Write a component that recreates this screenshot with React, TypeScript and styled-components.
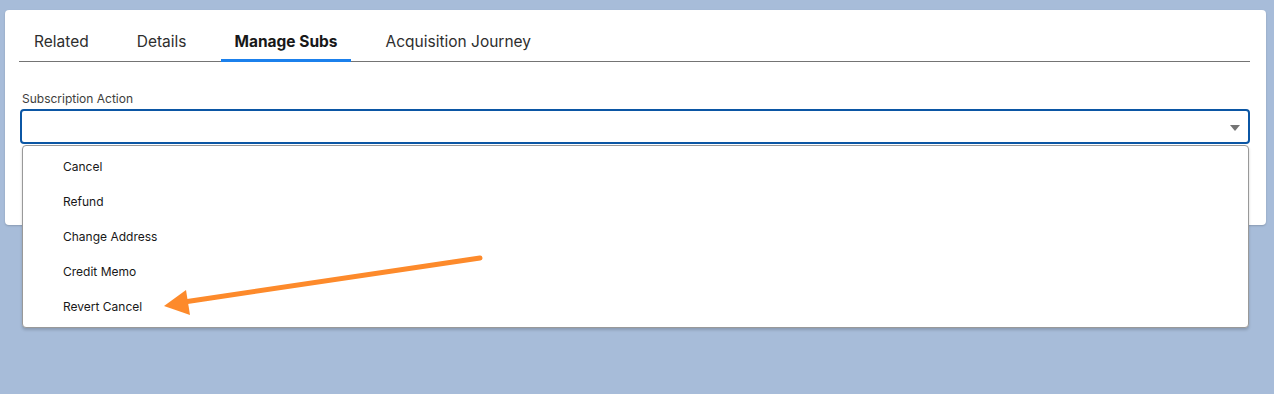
import React from "react";
import styled, { createGlobalStyle } from "styled-components";

const GlobalStyle = createGlobalStyle`
  html, body {
    margin: 0;
    padding: 0;
    background: #a7bcd9;
    font-family: Inter, "Liberation Sans", Arial, sans-serif;
    color: #181818;
  }
`;

const Page = styled.div`
  position: relative;
  width: 1274px;
  height: 394px;
  padding: 10px 8px 0 5px;
  box-sizing: border-box;
`;

const Card = styled.div`
  background: #ffffff;
  border-radius: 4px;
  height: 215px;
  padding: 14px 16px 0 14px;
  box-sizing: border-box;
  box-shadow: 0 1px 2px rgba(0, 0, 0, 0.18);
`;

const TabBar = styled.div`
  display: flex;
  height: 37px;
  border-bottom: 1px solid #747474;
  padding-left: 2px;
  gap: 22px;
`;

const Tab = styled.div<{ $active?: boolean }>`
  display: flex;
  align-items: center;
  padding: 0 13px 3px;
  font-size: 15.5px;
  font-weight: ${(p) => (p.$active ? 700 : 400)};
  color: ${(p) => (p.$active ? "#181818" : "#2e2e2e")};
  box-shadow: ${(p) => (p.$active ? "inset 0 -3px 0 #1b80ec" : "none")};
  margin-bottom: -1px;
`;

const Field = styled.div`
  padding-top: 30px;
  padding-left: 1px;
`;

const Label = styled.div`
  font-size: 12px;
  color: #3e3e3c;
  margin: 0 0 3px 2px;
  line-height: 14px;
`;

const Combo = styled.div`
  position: relative;
`;

const Input = styled.div`
  height: 35px;
  border: 2px solid #0b56a4;
  border-radius: 4px;
  box-sizing: border-box;
  display: flex;
  align-items: center;
  justify-content: flex-end;
  padding-right: 8px;
`;

const Caret = styled.div`
  width: 0;
  height: 0;
  border-left: 5px solid transparent;
  border-right: 5px solid transparent;
  border-top: 6px solid #747474;
  margin-top: 2px;
`;

const Menu = styled.div`
  position: absolute;
  top: calc(100% + 1px);
  left: 2px;
  right: 1px;
  background: #ffffff;
  border: 1px solid #999999;
  border-radius: 4px;
  box-shadow: 0 2px 3px rgba(0, 0, 0, 0.18);
  padding: 3px 0 3px;
  z-index: 2;
`;

const Option = styled.div`
  height: 35px;
  display: flex;
  align-items: center;
  padding-left: 40px;
  font-size: 12px;
  color: #181818;
`;

const Annotation = styled.svg`
  position: absolute;
  left: 0;
  top: 0;
  pointer-events: none;
  z-index: 3;
`;

const tabs = ["Related", "Details", "Manage Subs", "Acquisition Journey"];
const options = ["Cancel", "Refund", "Change Address", "Credit Memo", "Revert Cancel"];

export default function App() {
  return (
    <>
      <GlobalStyle />
      <Page>
        <Card>
          <TabBar>
            {tabs.map((t) => (
              <Tab key={t} $active={t === "Manage Subs"}>
                {t}
              </Tab>
            ))}
          </TabBar>
          <Field>
            <Label>Subscription Action</Label>
            <Combo>
              <Input>
                <Caret />
              </Input>
              <Menu>
                {options.map((o) => (
                  <Option key={o}>{o}</Option>
                ))}
              </Menu>
            </Combo>
          </Field>
        </Card>
        <Annotation width="1274" height="394" viewBox="0 0 1274 394">
          <line x1="480" y1="258" x2="184" y2="302" stroke="#fd8a2b" strokeWidth="5" strokeLinecap="round" />
          <polygon points="164,306 186,290 190,315" fill="#fd8a2b" />
        </Annotation>
      </Page>
    </>
  );
}
